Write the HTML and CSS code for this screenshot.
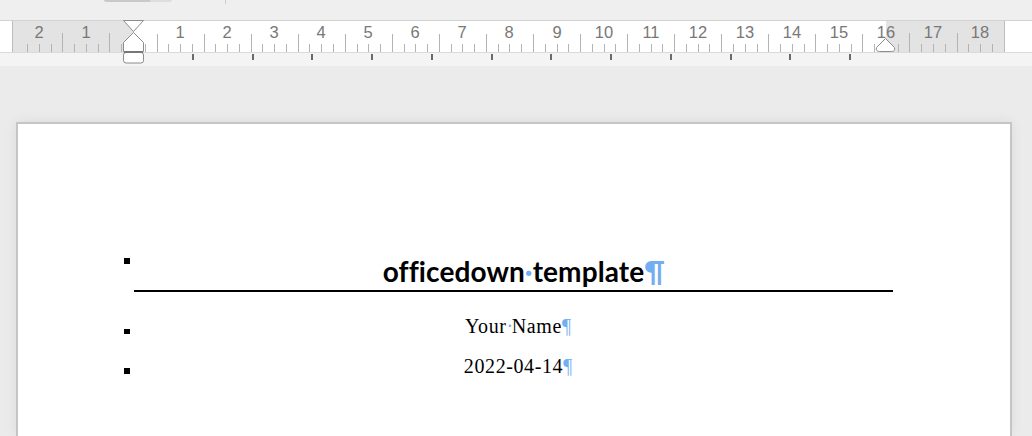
FILE: index.html
```html
<!DOCTYPE html>
<html>
<head>
<meta charset="utf-8">
<link rel="stylesheet" href="styles.css">
</head>
<body>
<div class="topbar">
  <div class="thumb"></div>
  <div class="sep"></div>
</div>
<svg class="ruler" width="1032" height="46" viewBox="0 0 1032 46" xmlns="http://www.w3.org/2000/svg">
  <rect x="0" y="0" width="1032" height="1" fill="#d2d2d2"/>
  <rect x="0" y="1" width="1032" height="31" fill="#ffffff"/>
  <rect x="12" y="1" width="121" height="31" fill="#e3e3e3"/>
  <rect x="886" y="1" width="118" height="31" fill="#e3e3e3"/>
  <rect x="12" y="1" width="1" height="31" fill="#bcbcbc"/>
  <rect x="1004" y="1" width="1" height="31" fill="#bcbcbc"/>
  <rect x="0" y="32" width="1032" height="1" fill="#dadada"/>
  <rect x="0" y="33" width="1032" height="13" fill="#f4f4f4"/>
  <path stroke="#b3b3b3" stroke-width="1" fill="none" d="
M27.5 24V32M39.5 24V32M51.5 24V32M62.5 13V32M74.5 24V32M86.5 24V32M98.5 24V32M109.5 13V32M121.5 24V32
M145.5 24V32M157.5 14V32M168.5 24V32M180.5 24V32M192.5 24V32M204.5 14V32M215.5 24V32M227.5 24V32M239.5 24V32
M251.5 14V32M262.5 24V32M274.5 24V32M286.5 24V32M298.5 14V32M309.5 24V32M321.5 24V32M333.5 24V32M345.5 14V32
M357.5 24V32M368.5 24V32M380.5 24V32M392.5 14V32M404.5 24V32M415.5 24V32M427.5 24V32M439.5 14V32M451.5 24V32
M462.5 24V32M474.5 24V32M486.5 14V32M498.5 24V32M509.5 24V32M521.5 24V32M533.5 14V32M545.5 24V32M557.5 24V32
M568.5 24V32M580.5 14V32M592.5 24V32M604.5 24V32M615.5 24V32M627.5 14V32M639.5 24V32M651.5 24V32M662.5 24V32
M674.5 14V32M686.5 24V32M698.5 24V32M709.5 24V32M721.5 14V32M733.5 24V32M745.5 24V32M757.5 24V32M768.5 14V32
M780.5 24V32M792.5 24V32M804.5 24V32M815.5 14V32M827.5 24V32M839.5 24V32M851.5 24V32M862.5 14V32M874.5 24V32
M898.5 24V32M909.5 13V32M921.5 24V32M933.5 24V32M945.5 24V32M957.5 13V32M968.5 24V32M980.5 24V32M992.5 24V32"/>
  <g class="nums" fill="#787878" text-anchor="middle">
    <text x="39" y="18">2</text>
    <text x="86" y="18">1</text>
    <text x="180" y="18">1</text>
    <text x="227" y="18">2</text>
    <text x="274" y="18">3</text>
    <text x="321" y="18">4</text>
    <text x="368" y="18">5</text>
    <text x="415" y="18">6</text>
    <text x="462" y="18">7</text>
    <text x="509" y="18">8</text>
    <text x="557" y="18">9</text>
    <text x="604" y="18">10</text>
    <text x="651" y="18">11</text>
    <text x="698" y="18">12</text>
    <text x="745" y="18">13</text>
    <text x="792" y="18">14</text>
    <text x="839" y="18">15</text>
    <text x="886" y="18">16</text>
    <text x="933" y="18">17</text>
    <text x="980" y="18">18</text>
  </g>
  <g fill="#6a6a6a">
    <rect x="192" y="34" width="2" height="6"/>
    <rect x="252" y="34" width="2" height="6"/>
    <rect x="311" y="34" width="2" height="6"/>
    <rect x="371" y="34" width="2" height="6"/>
    <rect x="431" y="34" width="2" height="6"/>
    <rect x="491" y="34" width="2" height="6"/>
    <rect x="550" y="34" width="2" height="6"/>
    <rect x="610" y="34" width="2" height="6"/>
    <rect x="670" y="34" width="2" height="6"/>
    <rect x="730" y="34" width="2" height="6"/>
    <rect x="789" y="34" width="2" height="6"/>
    <rect x="849" y="34" width="2" height="6"/>
  </g>
  <g fill="#ffffff" stroke="#8c8c8c" stroke-width="1">
    <path d="M123.5 0.5L143.5 0.5L133.5 11.5Z"/>
    <path d="M133.5 12.5L143.5 22.5V31.5H123.5V22.5Z"/>
    <rect x="123.5" y="32.5" width="20" height="10.5" rx="2.5"/>
    <path d="M885.5 18.5L894.5 27.5Q895.5 31.5 891.5 31.5H879.5Q875.5 31.5 876.5 27.5Z"/>
  </g>
  <rect x="124" y="31" width="19" height="2" fill="#777777"/>
</svg>
<div class="canvas">
  <div class="page">
    <div class="content">
      <div class="row row-title">
        <span class="mark"></span>
        <p class="title">officedown<span class="sp">·</span>template<span class="pil">¶</span></p>
      </div>
      <div class="row row-name">
        <span class="mark"></span>
        <p class="meta">Your<span class="sp">·</span>Name<span class="pil">¶</span></p>
      </div>
      <div class="row row-date">
        <span class="mark"></span>
        <p class="meta">2022-04-14<span class="pil">¶</span></p>
      </div>
    </div>
  </div>
</div>
</body>
</html>
```

FILE: styles.css
```css
html, body {
  margin: 0;
  padding: 0;
}
body {
  width: 1032px;
  height: 436px;
  overflow: hidden;
  background: #ebebeb;
  font-family: "Liberation Sans", Arial, sans-serif;
}
.topbar {
  height: 20px;
  background: #efefef;
  display: flex;
  align-items: flex-start;
}
.thumb {
  margin-left: 104px;
  width: 68px;
  height: 2px;
  background: linear-gradient(to right, #c9c9c9 0, #c9c9c9 46px, #dedede 46px);
  border-radius: 0 0 2px 2px;
}
.sep {
  margin-left: 53px;
  width: 1px;
  height: 4px;
  background: #cfcfcf;
}
.ruler {
  display: block;
}
.nums {
  font-family: "Liberation Sans", Arial, sans-serif;
  font-size: 16.5px;
}
.canvas {
  padding-top: 56px;
  padding-left: 16px;
}
.page {
  width: 992px;
  height: 312px;
  background: #ffffff;
  border: 2px solid #c5c5c5;
  border-bottom: none;
  box-shadow: 0 0 12px rgba(0, 0, 0, 0.07);
}
.content {
  margin-left: 106px;
  padding-top: 133px;
  width: 769px;
}
.row {
  display: flex;
  align-items: flex-start;
}
.mark {
  flex: 0 0 6px;
  height: 6px;
  margin-right: 4px;
  background: #000;
}
.row p {
  margin: 0;
  flex: 1;
  text-align: center;
  white-space: nowrap;
}
.title {
  font-family: Lato, "Open Sans", sans-serif;
  font-weight: 700;
  font-size: 28px;
  line-height: 29px;
  letter-spacing: 0.1px;
  padding-bottom: 4px;
  border-bottom: 2px solid #000;
  color: #000;
}
.row-title .mark {
  margin-top: 1px;
}
.meta {
  font-family: "Liberation Serif", "Times New Roman", serif;
  font-size: 20px;
  line-height: 22px;
  letter-spacing: 0.6px;
  color: #000;
}
.row-name {
  margin-top: 23px;
}
.row-name .mark {
  margin-top: 14px;
  height: 5px;
}
.row-date {
  margin-top: 18px;
}
.row-date .mark {
  margin-top: 13px;
}
.sp {
  color: #72aef2;
}
.meta .sp {
  letter-spacing: -1.5px;
}
.pil {
  display: inline-block;
  width: 0;
  color: #72aef2;
  letter-spacing: 0;
}
```
